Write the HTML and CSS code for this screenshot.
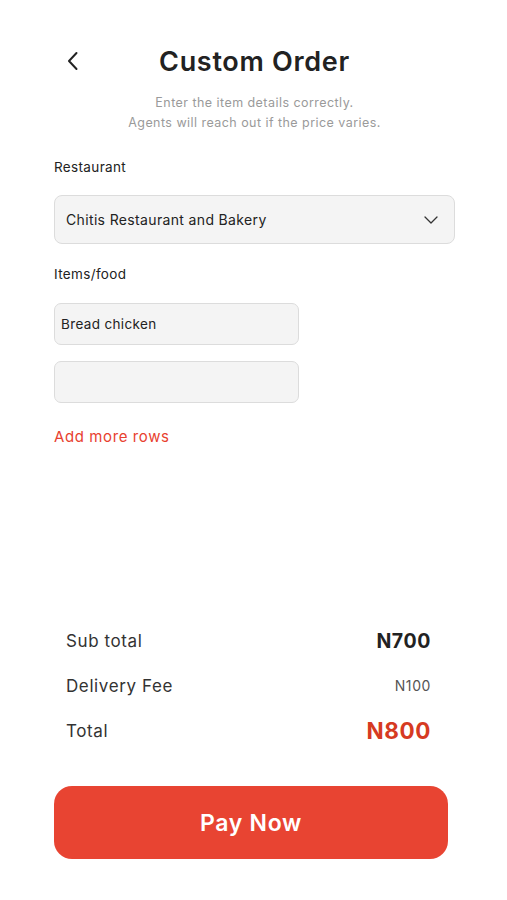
FILE: index.html
```html
<!DOCTYPE html>
<html lang="en">
<head>
  <meta charset="UTF-8" />
  <meta name="viewport" content="width=device-width, initial-scale=1.0"/>
  <title>Custom Order</title>
  <link rel="stylesheet" href="styles.css">
</head>
<body>

  <div class="page">
    <header>
      <div class="back-btn">
        <svg width="14" height="20" viewBox="0 0 14 20" fill="none">
          <path d="M10.5 2 L3 10 L10.5 18" stroke="#222" stroke-width="2" stroke-linecap="round" stroke-linejoin="round"/>
        </svg>
      </div>
      <h1>Custom Order</h1>
    </header>

    <p class="subtitle">
      Enter the item details correctly.<br>
      Agents will reach out if the price varies.
    </p>

    <div class="field">
      <label>Restaurant</label>
      <div class="select-box">
        <span>Chitis Restaurant and Bakery</span>
        <svg width="16" height="10" viewBox="0 0 16 10" fill="none">
          <path d="M2 2 L8 8 L14 2" stroke="#333" stroke-width="1.3" stroke-linecap="round" stroke-linejoin="round"/>
        </svg>
      </div>
    </div>

    <div class="field">
      <label>Items/food</label>
      <div class="item-rows">
        <div class="item-input">Bread chicken</div>
        <div class="item-input"></div>
      </div>
      <a href="#" class="add-rows">Add more rows</a>
    </div>

    <div class="summary">
      <div class="summary-row">
        <span>Sub total</span>
        <span class="amount">N700</span>
      </div>
      <div class="summary-row">
        <span>Delivery Fee</span>
        <span class="fee">N100</span>
      </div>
      <div class="summary-row">
        <span>Total</span>
        <span class="total">N800</span>
      </div>
    </div>

    <button class="pay-btn">Pay Now</button>
  </div>

</body>
</html>
```

FILE: styles.css
```css
* {
  box-sizing: border-box;
}

body {
  font-family: Inter, "Noto Sans", Arial, sans-serif;
  margin: 0;
  padding: 0;
  background: #fff;
  color: #222;
  letter-spacing: 0.35px;
}

.page {
  width: 507px;
  padding: 40px 52px 0 54px;
}

header {
  position: relative;
  height: 42px;
  display: flex;
  align-items: center;
  justify-content: center;
}

.back-btn {
  position: absolute;
  left: 12px;
  top: 11px;
  cursor: pointer;
}

h1 {
  margin: 0;
  font-size: 27px;
  font-weight: 600;
  color: #222;
  letter-spacing: 0.7px;
}

.subtitle {
  margin: 11px 0 0;
  text-align: center;
  font-size: 12.5px;
  line-height: 20px;
  color: #9a9a9a;
  letter-spacing: 0.45px;
}

.field label {
  display: block;
  font-size: 13.5px;
  color: #222;
  line-height: 20px;
}

.field:nth-of-type(1) label {
  margin-top: 24px;
}

.select-box {
  margin-top: 18px;
  width: 401px;
  height: 49px;
  background: #f4f4f4;
  border: 1px solid #dcdcdc;
  border-radius: 8px;
  display: flex;
  align-items: center;
  justify-content: space-between;
  padding: 0 15px 0 11px;
  font-size: 14px;
  color: #222;
}

.field + .field label {
  margin-top: 20px;
}

.item-rows {
  margin-top: 19px;
  display: flex;
  flex-direction: column;
  gap: 16px;
}

.item-input {
  width: 245px;
  height: 42px;
  background: #f4f4f4;
  border: 1px solid #dcdcdc;
  border-radius: 7px;
  display: flex;
  align-items: center;
  padding: 0 6px;
  font-size: 13.5px;
  color: #222;
}

.add-rows {
  display: block;
  margin-top: 24px;
  font-size: 15px;
  line-height: 20px;
  color: #e8412f;
  text-decoration: none;
  letter-spacing: 0.6px;
}

.summary {
  margin-top: 181px;
  padding: 0 24px 0 12px;
  display: flex;
  flex-direction: column;
  gap: 20px;
}

.summary-row {
  display: flex;
  align-items: center;
  justify-content: space-between;
  height: 25px;
  font-size: 17px;
  color: #333;
  letter-spacing: 0.6px;
}

.amount {
  font-size: 19.5px;
  font-weight: 700;
  color: #222;
}

.fee {
  font-size: 14px;
  color: #555;
}

.total {
  font-size: 22.5px;
  font-weight: 700;
  color: #d63a22;
}

.pay-btn {
  display: block;
  margin-top: 43px;
  width: 394px;
  height: 73px;
  border: none;
  border-radius: 18px;
  background: #e84432;
  color: #fff;
  font-family: inherit;
  font-size: 23px;
  font-weight: 600;
  letter-spacing: 0.7px;
  cursor: pointer;
}
```
